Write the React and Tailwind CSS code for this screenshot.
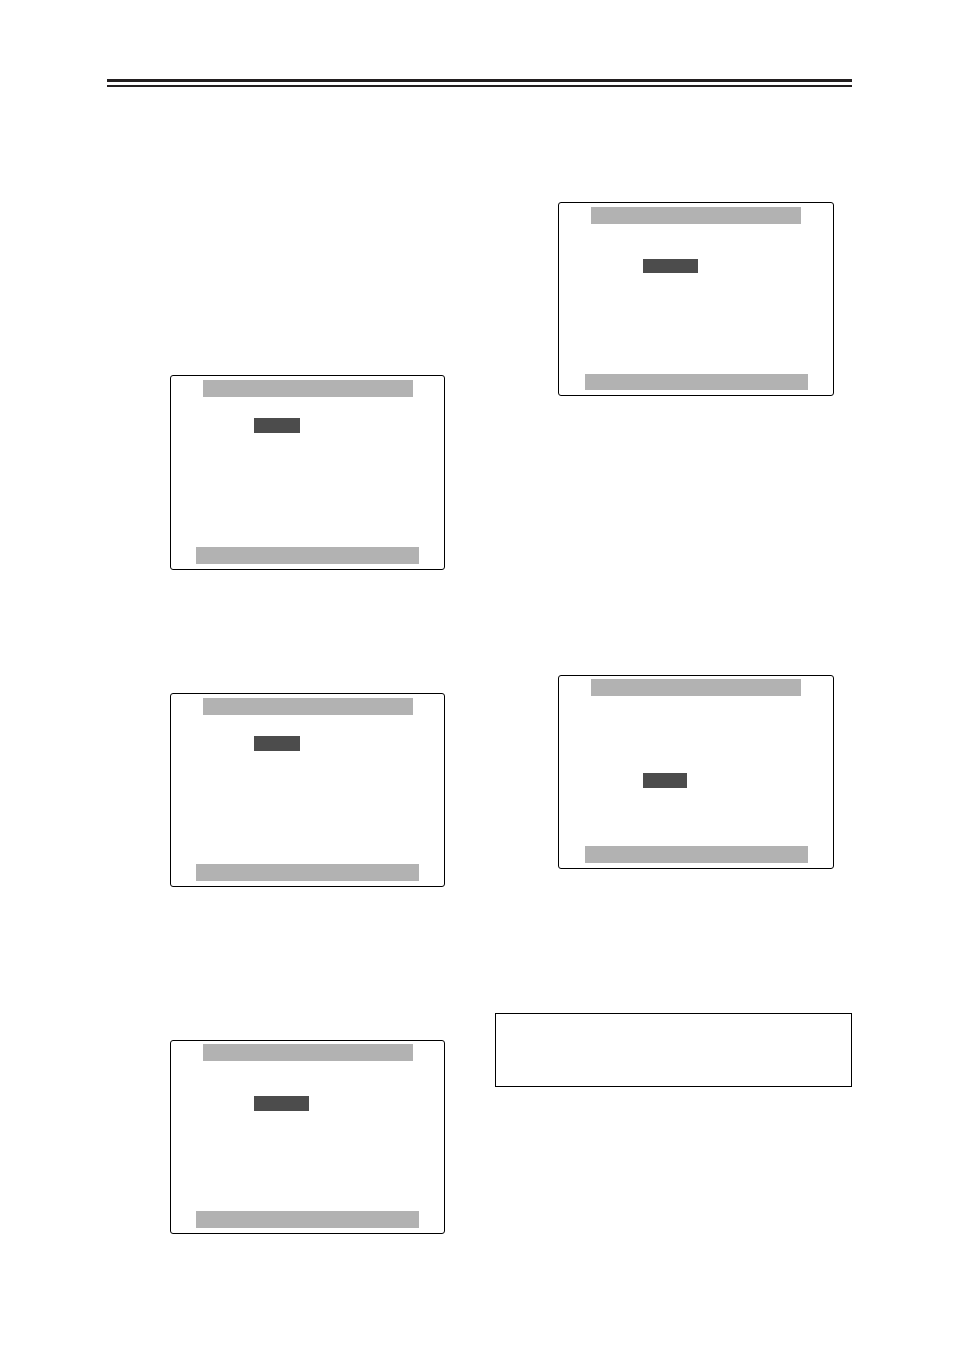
const leftScreens = [
  { id: 'left-1', frame: 'mt-[288px] pt-1', selected: 'mt-[21px] mb-[114px] w-[46px] h-[15px]' },
  { id: 'left-2', frame: 'mt-[123px] pt-1', selected: 'mt-[21px] mb-[113px] w-[46px] h-[15px]' },
  { id: 'left-3', frame: 'mt-[153px] pt-[3px]', selected: 'mt-[35px] mb-[100px] w-[55px] h-[15px]' },
];

const rightScreens = [
  { id: 'right-1', frame: 'mt-[115px] pt-1', selected: 'mt-[35px] mb-[101px] w-[55px] h-[14px]', footer: 'h-4' },
  { id: 'right-2', frame: 'mt-[279px] pt-[3px]', selected: 'mt-[77px] mb-[58px] w-[44px] h-[15px]', footer: 'h-[17px]' },
];

// Menu screen outline: title bar, selected value, footer bar
const LeftScreen = ({ screen }) => (
  <div className={`${screen.frame} ml-[63px] mr-[19px] flex flex-col rounded-[3px] border border-black pb-[5px]`}>
    <div className="ml-8 mr-[31px] h-[17px] bg-[#b2b2b2]" />
    <div className={`${screen.selected} ml-[83px] bg-[#4c4c4c]`} />
    <div className="mx-[25px] h-[17px] bg-[#b2b2b2]" />
  </div>
);

const RightScreen = ({ screen }) => (
  <div className={`${screen.frame} ml-[63px] mr-[18px] flex flex-col rounded-[3px] border border-black pb-[5px]`}>
    <div className="mx-8 h-[17px] bg-[#b2b2b2]" />
    <div className={`${screen.selected} ml-[84px] bg-[#4c4c4c]`} />
    <div className={`${screen.footer} ml-[26px] mr-[25px] bg-[#b2b2b2]`} />
  </div>
);

const App = () => {
  return (
    <main className="min-h-screen bg-white pt-[79px] pr-[102px] pb-[115px] pl-[107px] font-['Liberation_Sans',sans-serif]">
      {/* Double rule */}
      <header className="h-2 border-t-[3px] border-b-2 border-[#231f20]" />

      <div className="grid grid-cols-2 gap-x-[31px]">
        <section className="flex flex-col">
          {leftScreens.map(screen => (
            <LeftScreen key={screen.id} screen={screen} />
          ))}
        </section>

        <section className="flex flex-col">
          {rightScreens.map(screen => (
            <RightScreen key={screen.id} screen={screen} />
          ))}

          {/* Note box */}
          <aside className="mt-[144px] h-[74px] border border-black" />
        </section>
      </div>
    </main>
  );
};

export default App;
